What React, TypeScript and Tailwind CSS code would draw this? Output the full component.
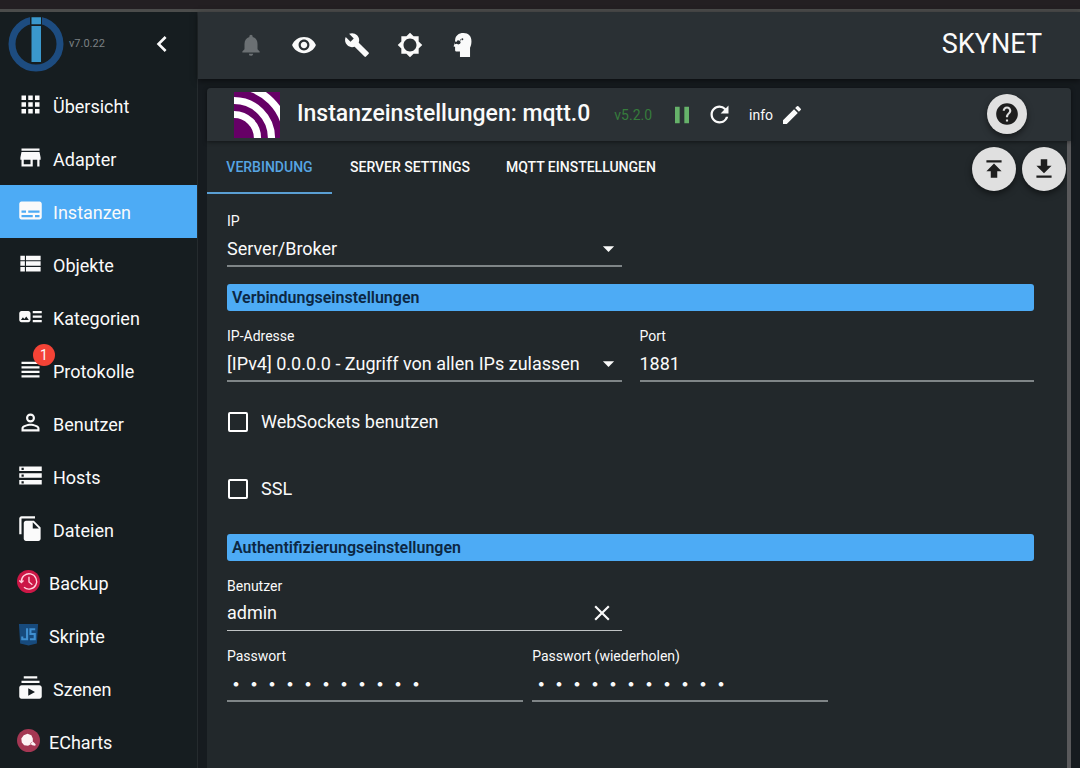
import { useState } from "react";
import type { ReactNode } from "react";
import type { IconType } from "react-icons";
import {
  MdApps,
  MdArrowDropDown,
  MdArtTrack,
  MdBrightness5,
  MdBuild,
  MdChevronLeft,
  MdClose,
  MdEdit,
  MdFileCopy,
  MdGetApp,
  MdHelp,
  MdNotifications,
  MdPause,
  MdPersonOutline,
  MdPublish,
  MdRefresh,
  MdStorage,
  MdStore,
  MdSubscriptions,
  MdSubtitles,
  MdViewHeadline,
  MdViewList,
  MdVisibility,
} from "react-icons/md";

const BrokerLogo = () => (
  <svg viewBox="0 0 56 56" className="size-14 shrink-0" aria-label="ioBroker">
    <circle cx="28" cy="28" r="24" fill="none" stroke="#1d4c80" strokeWidth="7" />
    <path d="M22 0h12v10h-12z" fill="#161d20" />
    <path d="M23.500 1.300h9.500v7h-9.500zM23.500 10h9.500v36h-9.500z" fill="#3a98cc" />
  </svg>
);

const MqttLogo = () => (
  <svg viewBox="0 0 46 46" className="size-[46px] shrink-0" aria-label="MQTT">
    <path d="M0 0h46v46H0z" fill="#660066" />
    <g fill="none" stroke="#fff" strokeWidth="7.200">
      <circle cx="0" cy="46" r="23.500" />
      <circle cx="0" cy="46" r="37.500" />
      <circle cx="0" cy="46" r="52.300" />
    </g>
  </svg>
);

const ExpertIcon = () => (
  <svg viewBox="0 0 24 24" className="size-[26px]" fill="currentColor">
    <path d="M12.500 1C7.800 1 5 3.500 4.700 7.500L4.500 10l-1 2.600c-.2.500.1.800.6.900l.6.100v2.900c0 1 .6 1.500 1.600 1.500h2.900v5h9.300v-8.500c.9-1.600 1.300-3.600 1.300-6C19.800 3.900 17 1 12.500 1z" />
    <g fill="#2a3034">
      <path d="M4.600 8.800l1.600.3.800-1.600 1.600.3 1.300 1.400-.6 1.600-1.700.7-1.300-.7-1.900.6z" />
      <circle cx="11.400" cy="6.600" r=".9" />
      <circle cx="9.800" cy="7.300" r=".5" />
    </g>
  </svg>
);

const BackupIcon = () => (
  <svg viewBox="0 0 24 24" className="size-[23px]">
    <circle cx="12" cy="12" r="12" fill="#cc1746" />
    <path
      d="M4.500 12a8 8 0 1 1 2.800 6M2.400 11l2.200 2.200L6.800 11M12.500 7v5.500l3.500 2.800"
      fill="none"
      stroke="#ffd5df"
      strokeWidth="1.400"
    />
  </svg>
);

const ScriptIcon = () => (
  <svg viewBox="0 0 24 24" className="size-[23px]">
    <path d="M2 1h20l-1.300 20.500L12 23.500l-8.700-2z" fill="#174a7c" />
    <path
      d="M10.500 5.500v11.500H5.500v-3M19 6.500h-5v5h4.500V17h-5"
      fill="none"
      stroke="#3f8fd0"
      strokeWidth="2.200"
    />
  </svg>
);

const EChartsIcon = () => (
  <svg viewBox="0 0 24 24" className="size-[23px]">
    <circle cx="12" cy="12" r="12" fill="#a43753" />
    <path
      d="M7 6.500l4-1.500 4 1.500 1.500 3.500v3l3 3-.5 1.500-3-.5-1.500-1-3 1.500-4-.5-2.500-3-.5-4z"
      fill="#fdf3f5"
    />
    <path d="M13.500 15.500l2.500-2" stroke="#d08b9b" strokeWidth="1" />
  </svg>
);

type MenuEntry = {
  label: string;
  icon?: IconType;
  custom?: ReactNode;
  badge?: number;
};

const menu: MenuEntry[] = [
  { label: "Übersicht", icon: MdApps },
  { label: "Adapter", icon: MdStore },
  { label: "Instanzen", icon: MdSubtitles },
  { label: "Objekte", icon: MdViewList },
  { label: "Kategorien", icon: MdArtTrack },
  { label: "Protokolle", icon: MdViewHeadline, badge: 1 },
  { label: "Benutzer", icon: MdPersonOutline },
  { label: "Hosts", icon: MdStorage },
  { label: "Dateien", icon: MdFileCopy },
  { label: "Backup", custom: <BackupIcon /> },
  { label: "Skripte", custom: <ScriptIcon /> },
  { label: "Szenen", icon: MdSubscriptions },
  { label: "ECharts", custom: <EChartsIcon /> },
];

const Sidebar = () => (
  <aside className="w-[198px] shrink-0 border-r border-[#252b2e] bg-[#161d20]">
    <div className="flex h-16 items-center pl-2 pr-[19px]">
      <BrokerLogo />
      <span className="ml-[5px] text-[11px] text-[#7b8083]">v7.0.22</span>
      <button type="button" aria-label="Menü einklappen" className="ml-auto">
        <MdChevronLeft className="size-8" />
      </button>
    </div>
    <nav className="pt-[3px]">
      {menu.map(({ label, icon: Icon, custom, badge }) => (
        <a
          key={label}
          href="#"
          className={
            label === "Instanzen"
              ? "flex h-[53px] items-center gap-[9px] bg-[#4dabf5] pl-[17px] pt-0.5 text-lg"
              : "flex h-[53px] items-center gap-[9px] pl-[17px] pt-0.5 text-lg"
          }
        >
          <span className="relative pb-1">
            {Icon ? <Icon className="size-[27px]" /> : custom}
            {badge && (
              <span className="absolute -right-[11px] -top-3 flex size-[22px] items-center justify-center rounded-full bg-[#f44336] text-sm">
                {badge}
              </span>
            )}
          </span>
          {label}
        </a>
      ))}
    </nav>
  </aside>
);

const toolbar = [
  { label: "Benachrichtigungen", icon: <MdNotifications className="size-[26px] text-[#6b7073]" /> },
  { label: "Ansicht", icon: <MdVisibility className="size-[26px]" /> },
  { label: "Systemeinstellungen", icon: <MdBuild className="size-[26px]" /> },
  { label: "Farbthema", icon: <MdBrightness5 className="size-[26px]" /> },
  { label: "Expertenmodus", icon: <ExpertIcon /> },
];

const tabs = ["VERBINDUNG", "SERVER SETTINGS", "MQTT EINSTELLUNGEN"];

const Field = ({ id, label, children }: { id: string; label: string; children: ReactNode }) => (
  <div className="min-w-0">
    <label htmlFor={id} className="block text-sm leading-5">
      {label}
    </label>
    {children}
  </div>
);

const SelectField = ({ id, label, options }: { id: string; label: string; options: string[] }) => (
  <Field id={id} label={label}>
    <div className="grid items-center border-b-2 border-[#7f8587]">
      <select
        id={id}
        className="col-start-1 row-start-1 h-[34px] w-full appearance-none bg-transparent pr-7 pt-0.5 text-lg leading-6 outline-none"
      >
        {options.map((option) => (
          <option key={option}>{option}</option>
        ))}
      </select>
      <MdArrowDropDown className="pointer-events-none col-start-1 row-start-1 size-[27px] justify-self-end" />
    </div>
  </Field>
);

const PasswordField = ({ id, label }: { id: string; label: string }) => (
  <Field id={id} label={label}>
    <input
      id={id}
      type="password"
      defaultValue="hunter2hunt"
      className="h-9 w-full border-b-2 border-[#7f8587] bg-transparent font-['Noto_Sans_CJK_SC',sans-serif] text-lg font-bold outline-none"
    />
  </Field>
);

const Section = ({ children }: { children: ReactNode }) => (
  <h3 className="h-[27px] rounded-[3px] bg-[#4dabf5] px-[5px] text-base font-semibold leading-[27px] text-[#0c2743]">
    {children}
  </h3>
);

const Check = ({ id, label }: { id: string; label: string }) => (
  <div className="flex h-10 items-center gap-[13px]">
    <input
      id={id}
      type="checkbox"
      className="ml-px size-5 appearance-none rounded-[2px] border-2 border-white checked:bg-[#4dabf5]"
    />
    <label htmlFor={id} className="text-lg">
      {label}
    </label>
  </div>
);

const ConnectionForm = () => {
  const [user, setUser] = useState("admin");

  return (
    <form className="pb-16 pl-5 pr-[33px] pt-[17px]">
      <div className="grid grid-cols-2 gap-x-[18px]">
        <SelectField id="type" label="IP" options={["Server/Broker", "Client/Subscriber"]} />
      </div>

      <div className="mb-[15px] mt-[17px]">
        <Section>Verbindungseinstellungen</Section>
      </div>
      <div className="grid grid-cols-2 gap-x-[18px]">
        <SelectField
          id="bind"
          label="IP-Adresse"
          options={["[IPv4] 0.0.0.0 - Zugriff von allen IPs zulassen"]}
        />
        <Field id="port" label="Port">
          <input
            id="port"
            defaultValue="1881"
            className="h-9 w-full border-b-2 border-[#7f8587] bg-transparent text-lg outline-none"
          />
        </Field>
      </div>

      <div className="mb-[25px] mt-5 flex flex-col gap-[27px]">
        <Check id="websockets" label="WebSockets benutzen" />
        <Check id="ssl" label="SSL" />
      </div>

      <div className="mb-[15px]">
        <Section>Authentifizierungseinstellungen</Section>
      </div>
      <div className="grid grid-cols-2 gap-x-[18px]">
        <Field id="user" label="Benutzer">
          <div className="flex h-[35px] items-center border-b border-[#c0c3c4] pr-[7px]">
            <input
              id="user"
              value={user}
              onChange={(e) => setUser(e.target.value)}
              className="min-w-0 flex-1 bg-transparent text-lg outline-none"
            />
            <button type="button" aria-label="Löschen" onClick={() => setUser("")}>
              <MdClose className="size-[26px]" />
            </button>
          </div>
        </Field>
      </div>
      <div className="mt-[15px] grid w-3/4 grid-cols-2 gap-x-[9px] pr-1">
        <PasswordField id="pass" label="Passwort" />
        <PasswordField id="pass2" label="Passwort (wiederholen)" />
      </div>
    </form>
  );
};

const roundButton =
  "flex items-center justify-center rounded-full bg-[#e0e0e0] text-[#1e1e1e] shadow-[0_3px_6px_rgba(0,0,0,0.5)]";

const App = () => (
  <div className="flex h-screen flex-col overflow-hidden bg-[#161b1f] font-['Roboto',sans-serif] text-[#fafafa]">
    <div className="h-3 shrink-0 border-b-[3px] border-[#4b4c4b] bg-[#231f22]" />
    <div className="flex min-h-0 flex-1">
      <Sidebar />
      <div className="flex min-w-0 flex-1 flex-col">
        <header className="flex h-[67px] shrink-0 items-center bg-[#2a3034] pb-0.5 pl-[26px] pr-[38px] shadow-[0_2px_6px_rgba(0,0,0,0.5)]">
          {toolbar.map(({ label, icon }) => (
            <button
              key={label}
              type="button"
              aria-label={label}
              className="flex w-[53px] justify-center"
            >
              {icon}
            </button>
          ))}
          <span className="ml-auto text-[27px]">SKYNET</span>
        </header>

        <main className="mx-[9px] mt-[9px] flex min-h-0 flex-1 flex-col rounded-t bg-[#22282b]">
          <div className="z-10 flex h-[53px] shrink-0 items-center rounded-t bg-[#2b3135] pl-[27px] pr-11 shadow-[0_1px_4px_rgba(0,0,0,0.5)]">
            <MqttLogo />
            <h1 className="ml-[17px] text-[23px] font-medium">Instanzeinstellungen: mqtt.0</h1>
            <span className="ml-6 text-sm text-[#367c3c]">v5.2.0</span>
            <button type="button" aria-label="Pause" className="ml-4 text-[#66b26a]">
              <MdPause className="size-7" />
            </button>
            <button type="button" aria-label="Neu starten" className="ml-[10px]">
              <MdRefresh className="size-[27px]" />
            </button>
            <span className="ml-4 text-sm">info</span>
            <button type="button" aria-label="Bearbeiten" className="ml-[7px]">
              <MdEdit className="size-6" />
            </button>
            <button type="button" aria-label="Hilfe" className={`${roundButton} mb-0.5 ml-auto size-10`}>
              <MdHelp className="size-[26px]" />
            </button>
          </div>

          <div className="min-h-0 flex-1 overflow-hidden border-r-4 border-[#59595b]">
            <div className="flex h-[53px] items-center">
              <div role="tablist" className="flex h-full">
                {tabs.map((tab) => (
                  <button
                    key={tab}
                    type="button"
                    role="tab"
                    aria-selected={tab === tabs[0]}
                    className={
                      tab === tabs[0]
                        ? "min-w-[125px] border-b-2 border-[#5a9fd4] px-[18px] text-sm font-medium text-[#56a5e3]"
                        : "min-w-[125px] border-b-2 border-transparent px-[18px] text-sm font-medium"
                    }
                  >
                    {tab}
                  </button>
                ))}
              </div>
              <div className="ml-auto flex gap-[6px] pr-px pt-0.5">
                <button type="button" aria-label="Importieren" className={`${roundButton} size-11`}>
                  <MdPublish className="size-[26px]" />
                </button>
                <button type="button" aria-label="Exportieren" className={`${roundButton} size-11`}>
                  <MdGetApp className="size-[26px]" />
                </button>
              </div>
            </div>
            <ConnectionForm />
          </div>
        </main>
      </div>
    </div>
  </div>
);

export default App;
